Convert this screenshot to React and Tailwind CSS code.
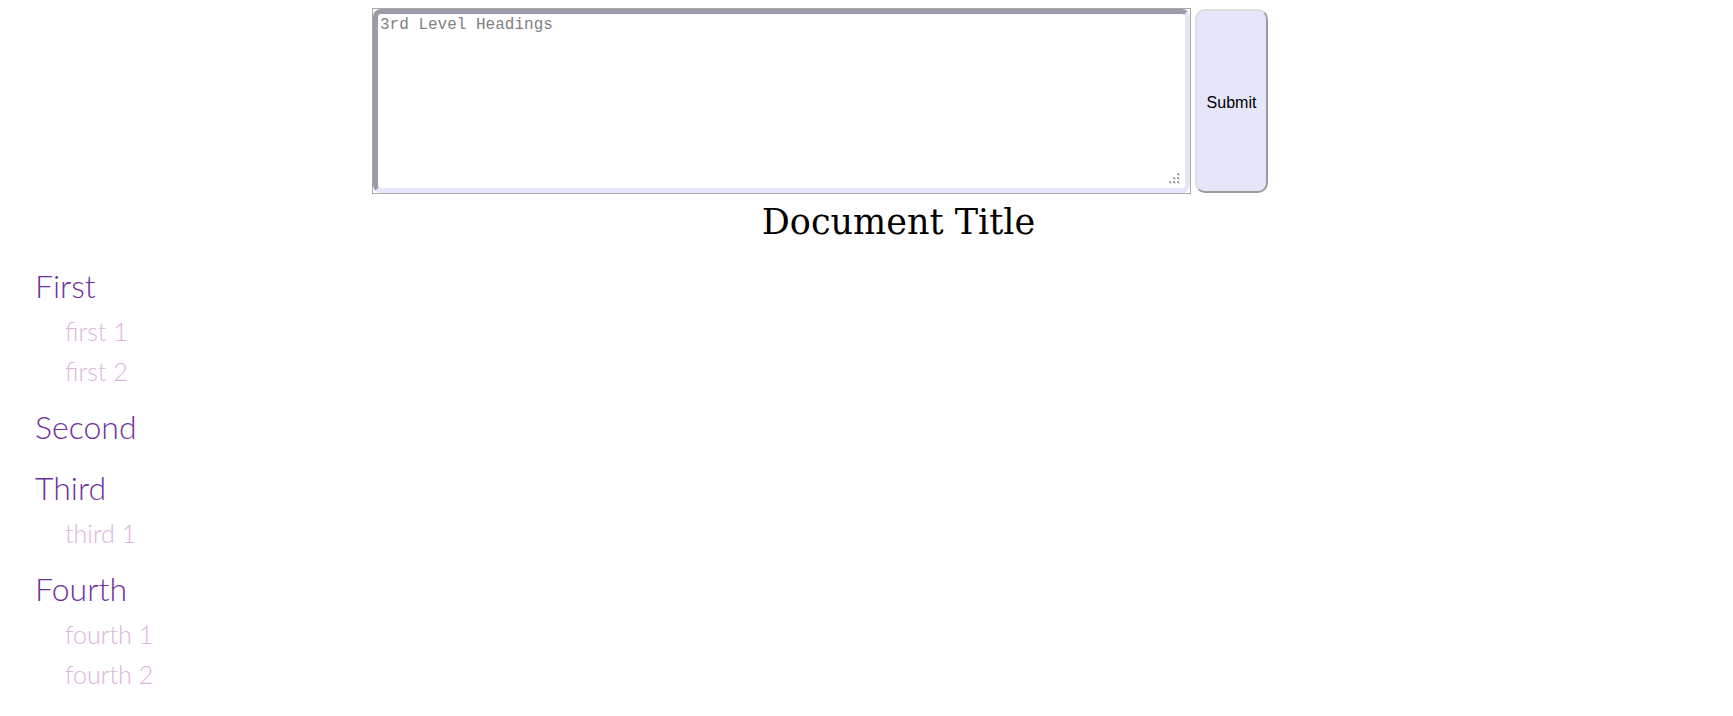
import React from "react";

const sections = [
  { title: "First", items: ["first 1", "first 2"] },
  { title: "Second", items: [] },
  { title: "Third", items: ["third 1"] },
  { title: "Fourth", items: ["fourth 1", "fourth 2"] },
];

// dotted resize grip, drawn like the native one
const Grip = () => (
  <svg
    width="12"
    height="12"
    viewBox="0 0 12 12"
    className="absolute right-[9px] bottom-[8px] pointer-events-none"
  >
    {[
      [8, 0],
      [4, 4],
      [8, 4],
      [0, 8],
      [4, 8],
      [8, 8],
    ].map(([x, y]) => (
      <g key={`${x}-${y}`}>
        <rect x={x + 1} y={y + 1} width="2" height="2" fill="#e0e0e0" />
        <rect x={x} y={y} width="2" height="2" fill="#a3a3a3" />
      </g>
    ))}
  </svg>
);

const App = () => {
  return (
    <div className="min-h-screen bg-white">
      {/* editor form */}
      <form
        className="flex items-center gap-[4px] pt-2 pl-[372px]"
        onSubmit={(e) => e.preventDefault()}
      >
        <div className="relative border border-[#a9a9a9] w-[819px] h-[186px] flex">
          <textarea
            autoFocus
            placeholder="3rd Level Headings"
            className="w-full h-full resize-none rounded-[8px] border-[5px] border-t-[#9c9ba9] border-l-[#9c9ba9] border-r-[#e6e6fa] border-b-[#e6e6fa] bg-white p-[2px] text-[16px] leading-[18px] text-[#808080] placeholder:text-[#808080] caret-black outline-none"
            style={{ fontFamily: '"Liberation Mono", monospace' }}
          />
          <Grip />
        </div>
        <button
          type="submit"
          className="w-[73px] h-[184px] pt-[4px] rounded-[10px] border-2 border-t-[#dedede] border-l-[#dedede] border-r-[#9c9c9c] border-b-[#9c9c9c] bg-[#e6e6fa] text-[16px] text-black"
          style={{ fontFamily: '"Liberation Sans", Arial, sans-serif' }}
        >
          Submit
        </button>
      </form>

      <h1
        className="mt-[2px] pl-[64px] text-center text-[35px] font-normal text-black"
        style={{ fontFamily: '"DejaVu Serif", serif' }}
      >
        Document Title
      </h1>

      {/* heading outline */}
      <nav
        className="mt-[12px] pl-[35px] flex flex-col gap-[11px]"
        style={{ fontFamily: 'Lato, "Open Sans", sans-serif' }}
      >
        {sections.map((s) => (
          <div key={s.title}>
            <div className="text-[32px] leading-[50px] font-light text-[#7030a0]">
              {s.title}
            </div>
            {s.items.map((item) => (
              <div
                key={item}
                className="pl-[30px] text-[25px] leading-[40px] font-light text-[#dab6dc]"
              >
                {item}
              </div>
            ))}
          </div>
        ))}
      </nav>
    </div>
  );
};

export default App;
